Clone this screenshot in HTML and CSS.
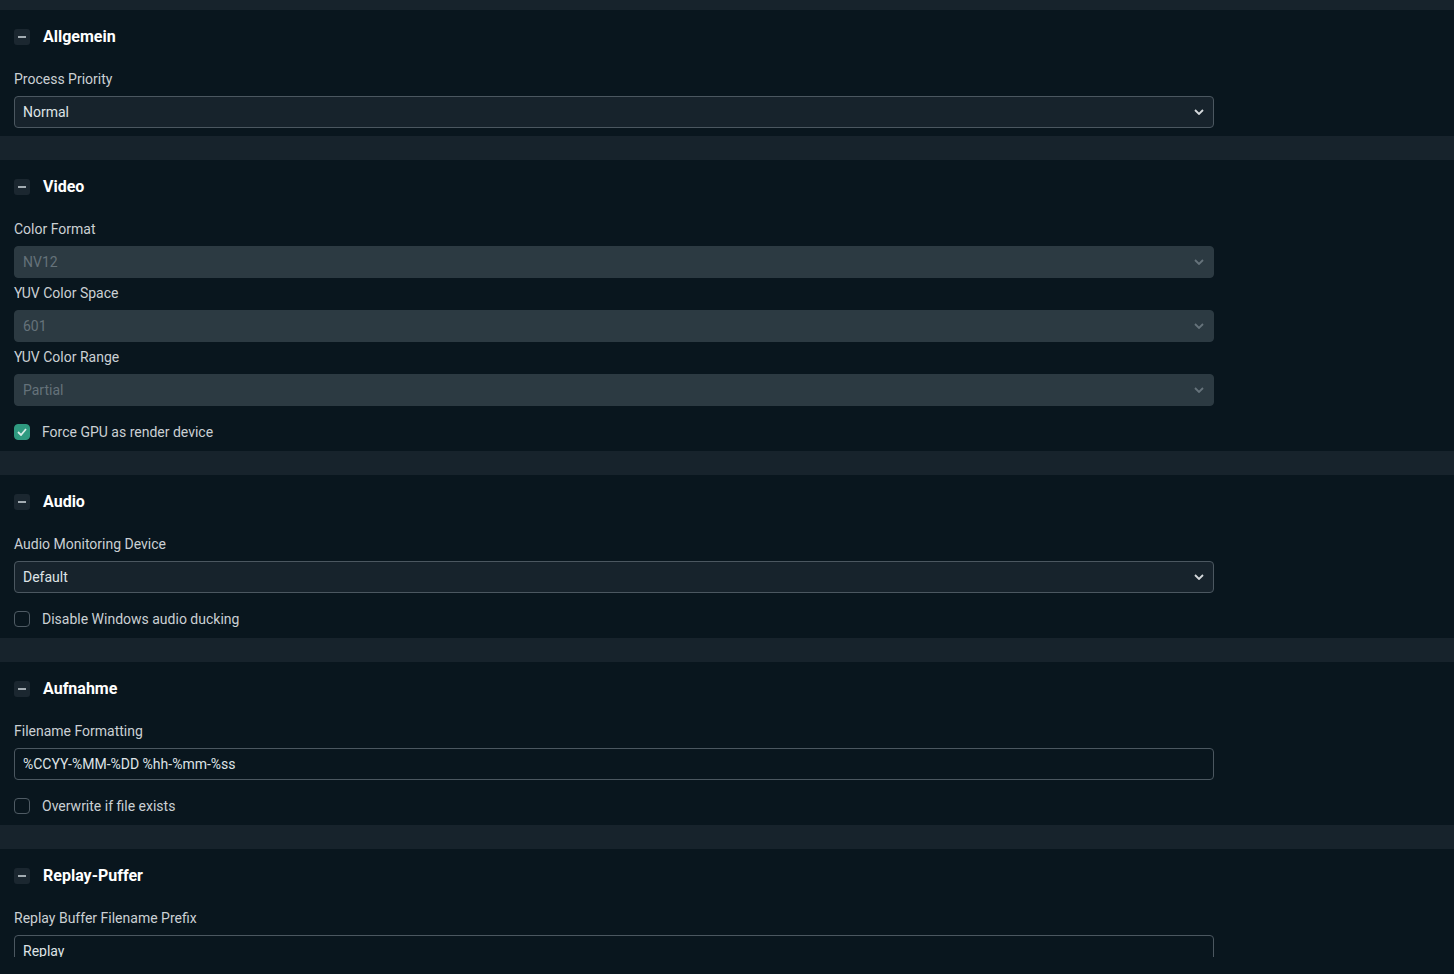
FILE: index.html
```html
<!DOCTYPE html>
<html lang="de">
<head>
    <meta charset="UTF-8">
    <meta name="viewport" content="width=device-width, initial-scale=1.0">
    <title>Einstellungen - Erweitert</title>
    <link rel="stylesheet" href="styles.css">
</head>
<body>
    <div class="settings">
        <div class="gutter top"></div>

        <section class="section">
            <div class="section-header">
                <span class="collapse-btn"></span>
                <h2>Allgemein</h2>
            </div>
            <div class="form-group">
                <label>Process Priority</label>
                <div class="select">
                    <span>Normal</span>
                    <svg class="chevron" width="10" height="6" viewBox="0 0 10 6"><path d="M1 1l4 4 4-4" fill="none" stroke="currentColor" stroke-width="1.8"/></svg>
                </div>
            </div>
        </section>

        <div class="gutter"></div>

        <section class="section">
            <div class="section-header">
                <span class="collapse-btn"></span>
                <h2>Video</h2>
            </div>
            <div class="form-group">
                <label>Color Format</label>
                <div class="select disabled">
                    <span>NV12</span>
                    <svg class="chevron" width="10" height="6" viewBox="0 0 10 6"><path d="M1 1l4 4 4-4" fill="none" stroke="currentColor" stroke-width="1.8"/></svg>
                </div>
            </div>
            <div class="form-group">
                <label>YUV Color Space</label>
                <div class="select disabled">
                    <span>601</span>
                    <svg class="chevron" width="10" height="6" viewBox="0 0 10 6"><path d="M1 1l4 4 4-4" fill="none" stroke="currentColor" stroke-width="1.8"/></svg>
                </div>
            </div>
            <div class="form-group">
                <label>YUV Color Range</label>
                <div class="select disabled">
                    <span>Partial</span>
                    <svg class="chevron" width="10" height="6" viewBox="0 0 10 6"><path d="M1 1l4 4 4-4" fill="none" stroke="currentColor" stroke-width="1.8"/></svg>
                </div>
            </div>
            <div class="checkbox-row">
                <span class="checkbox checked">
                    <svg width="10" height="8" viewBox="0 0 10 8"><path d="M1 4l3 3 5-6" fill="none" stroke="currentColor" stroke-width="1.8"/></svg>
                </span>
                <span>Force GPU as render device</span>
            </div>
        </section>

        <div class="gutter"></div>

        <section class="section">
            <div class="section-header">
                <span class="collapse-btn"></span>
                <h2>Audio</h2>
            </div>
            <div class="form-group">
                <label>Audio Monitoring Device</label>
                <div class="select">
                    <span>Default</span>
                    <svg class="chevron" width="10" height="6" viewBox="0 0 10 6"><path d="M1 1l4 4 4-4" fill="none" stroke="currentColor" stroke-width="1.8"/></svg>
                </div>
            </div>
            <div class="checkbox-row">
                <span class="checkbox"></span>
                <span>Disable Windows audio ducking</span>
            </div>
        </section>

        <div class="gutter"></div>

        <section class="section">
            <div class="section-header">
                <span class="collapse-btn"></span>
                <h2>Aufnahme</h2>
            </div>
            <div class="form-group">
                <label>Filename Formatting</label>
                <div class="text-input">%CCYY-%MM-%DD %hh-%mm-%ss</div>
            </div>
            <div class="checkbox-row">
                <span class="checkbox"></span>
                <span>Overwrite if file exists</span>
            </div>
        </section>

        <div class="gutter"></div>

        <section class="section">
            <div class="section-header">
                <span class="collapse-btn"></span>
                <h2>Replay-Puffer</h2>
            </div>
            <div class="form-group">
                <label>Replay Buffer Filename Prefix</label>
                <div class="text-input">Replay</div>
            </div>
        </section>
    </div>
</body>
</html>
```

FILE: styles.css
```css
body {
    margin: 0;
    padding: 0;
    background-color: #09161e;
    font-family: Roboto, "Liberation Sans", sans-serif;
    font-size: 14px;
    color: #cbd0d4;
}

.settings {
    height: 957px;
    overflow: hidden;
}

.gutter {
    height: 24px;
    background-color: #17232c;
}
.gutter.top {
    height: 10px;
}

.section {
    background-color: #09161e;
    padding: 19px 14px 8px;
}

/* header + first field: margins collapse, so the header margin sets the gap */
.section-header {
    display: flex;
    align-items: center;
    height: 16px;
    margin-bottom: 24px;
}
.section-header h2 {
    margin: 0 0 0 13px;
    font-size: 16px;
    font-weight: bold;
    color: #ffffff;
    line-height: 16px;
}

.collapse-btn {
    width: 16px;
    height: 16px;
    border-radius: 3px;
    background-color: #1b2730;
    display: flex;
    align-items: center;
    justify-content: center;
}
.collapse-btn::before {
    content: "";
    width: 8px;
    height: 2px;
    background-color: #a3acb2;
}

.form-group {
    width: 1200px;
    margin-top: 5px;
}
.form-group label {
    display: block;
    line-height: 20px;
    margin-bottom: 7px;
    color: #cbd0d4;
}

.select, .text-input {
    box-sizing: border-box;
    height: 32px;
    border: 1px solid #4b5760;
    border-radius: 4px;
    padding: 0 8px;
    display: flex;
    align-items: center;
    color: #dfe3e6;
}
.select {
    background-color: #17232c;
    justify-content: space-between;
}
.select .chevron {
    color: #d5d9dc;
    margin-right: 1px;
}
.select.disabled {
    background-color: #2c3a42;
    border-color: #2c3a42;
    color: #65727a;
}
.select.disabled .chevron {
    color: #66737b;
}

.text-input {
    background-color: #09161e;
}

.checkbox-row {
    display: flex;
    align-items: center;
    height: 16px;
    margin: 18px 0 3px;
    color: #cbd0d4;
}
.checkbox {
    box-sizing: border-box;
    width: 16px;
    height: 16px;
    border: 1px solid #4f5b64;
    border-radius: 4px;
    margin-right: 12px;
    display: flex;
    align-items: center;
    justify-content: center;
}
.checkbox.checked {
    background-color: #2f9a80;
    border-color: #2f9a80;
    color: #d9ece6;
}
```
